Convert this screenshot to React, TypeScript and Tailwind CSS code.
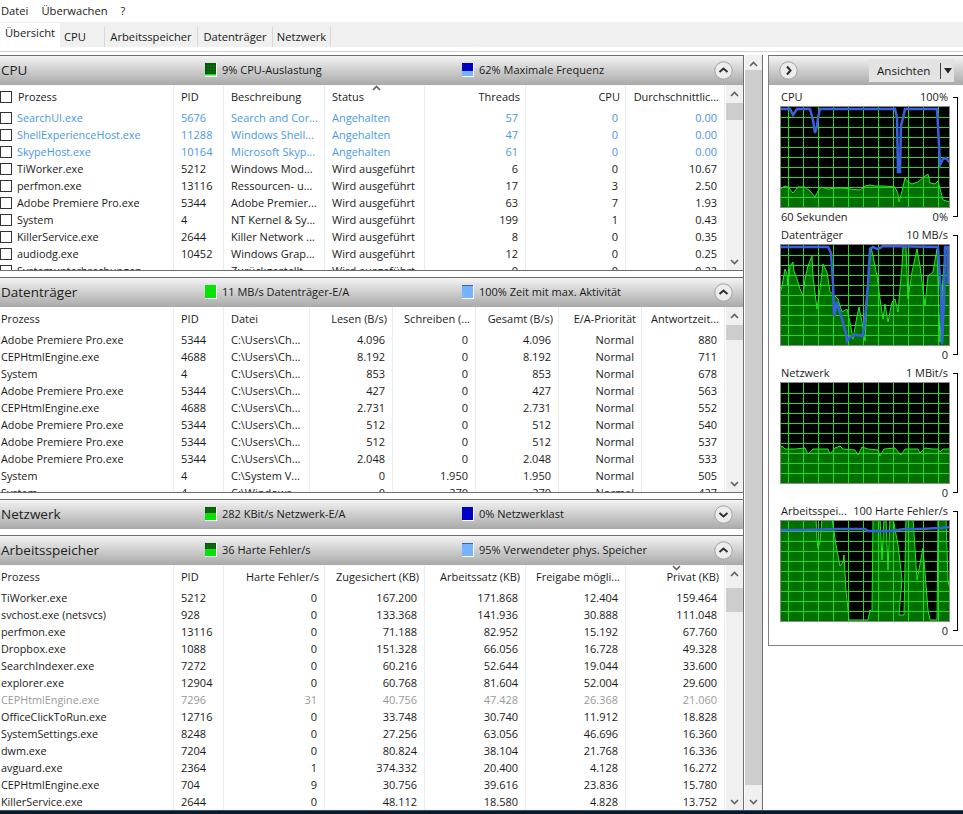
const GRID_X = [8.5, 23.5, 38.5, 53.5, 68.5, 83.5, 98.5, 113.5, 128.5, 143.5, 158.5]
const GRID_Y = [11.5, 21.5, 31.5, 41.5, 51.5, 61.5, 71.5, 81.5, 91.5]

interface ChartProps {
  green: string
  blue?: string
}

function Chart({ green, blue }: ChartProps) {
  return (
    <svg width="170" height="102" viewBox="0 0 170 102" className="block">
      <rect width="170" height="102" fill="#000" />
      <polygon points={`0,102 ${green} 170,102`} fill="#007000" />
      {GRID_X.map((x) => (
        <line key={x} x1={x} x2={x} y1="0" y2="102" stroke="#1cdc1c" strokeWidth="1" />
      ))}
      {GRID_Y.map((y) => (
        <line key={y} x1="0" x2="170" y1={y} y2={y} stroke="#1cdc1c" strokeWidth="1" />
      ))}
      <polyline points={green} fill="none" stroke="#22ea22" strokeWidth="1" />
      {blue && <polyline points={blue} fill="none" stroke="#3a60e0" strokeWidth="2.5" />}
      <rect x="0.5" y="0.5" width="169" height="101" fill="none" stroke="#8c8c8c" strokeWidth="1" />
    </svg>
  )
}

function Swatch({ kind }: { kind: string }) {
  return (
    <svg width="12" height="14" viewBox="0 0 12 14" className="block shrink-0">
      <rect width="12" height="14" fill="#fff" />
      {kind === 'cpu' && (
        <>
          <rect width="11" height="12" fill="#064a06" />
          <path d="M0 3h11M0 6h11M0 9h11M3 0v12M6 0v12M9 0v12" stroke="#0c8a0c" strokeWidth="0.7" />
          <rect y="11" width="11" height="1.5" fill="#10e010" />
        </>
      )}
      {kind === 'half' && (
        <>
          <rect width="11" height="6" fill="#064a06" />
          <path d="M0 2h11M0 4h11M3 0v6M6 0v6M9 0v6" stroke="#0c8a0c" strokeWidth="0.7" />
          <rect y="6" width="11" height="7" fill="#06e406" />
        </>
      )}
      {kind === 'full' && <rect width="11" height="13" fill="#06e406" />}
      {kind === 'freq' && (
        <>
          <rect width="11" height="8" fill="#0000c4" />
          <rect y="8" width="11" height="5" fill="#74b4ff" />
        </>
      )}
      {kind === 'light' && (
        <>
          <rect width="11" height="13" fill="#74b4ff" />
          <rect width="11" height="1" fill="#3c60b0" />
        </>
      )}
      {kind === 'dark' && <rect width="11" height="13" fill="#0000c4" />}
    </svg>
  )
}

function RoundButton({ dir }: { dir: 'up' | 'down' | 'right' }) {
  const path = dir === 'up' ? 'M5.5 11 9.5 7.5 13.5 11' : dir === 'down' ? 'M5.5 8 9.5 11.5 13.5 8' : 'M8 5.5 11.5 9.5 8 13.5'
  return (
    <svg width="19" height="19" viewBox="0 0 19 19" className="block">
      <circle cx="9.5" cy="9.5" r="8.7" fill="#ececec" stroke="#a2a2a2" strokeWidth="1" />
      <path d={path} fill="none" stroke="#303030" strokeWidth="2" />
    </svg>
  )
}

function Arrow({ dir }: { dir: 'up' | 'down' }) {
  return (
    <svg width="9" height="6" viewBox="0 0 9 6" className="block">
      <path d={dir === 'up' ? 'M1 5 4.5 1.5 8 5' : 'M1 1 4.5 4.5 8 1'} fill="none" stroke="#606060" strokeWidth="1.6" />
    </svg>
  )
}

function SectionHeader({ title, left, leftIcon, right, rightIcon, open }: {
  title: string
  left: string
  leftIcon: string
  right: string
  rightIcon: string
  open: boolean
}) {
  return (
    <div className="flex h-[30px] shrink-0 items-center border-t border-[#6e6e6e] bg-gradient-to-b from-[#f4f4f4] to-[#a9a9a9] pb-px">
      <div className="w-[205px] pl-px text-[13.5px] text-[#222]">{title}</div>
      <div className="flex w-[257px] items-center gap-[5px]">
        <Swatch kind={leftIcon} />
        <span>{left}</span>
      </div>
      <div className="flex items-center gap-[5px]">
        <Swatch kind={rightIcon} />
        <span>{right}</span>
      </div>
      <div className="ml-auto mr-[10px]">
        <RoundButton dir={open ? 'up' : 'down'} />
      </div>
    </div>
  )
}

function Scroll({ thumbClass, spacerClass }: { thumbClass: string; spacerClass?: string }) {
  return (
    <div className="flex w-[17px] shrink-0 flex-col bg-[#f0f0f0]">
      <div className="flex h-[18px] shrink-0 items-center justify-center">
        <Arrow dir="up" />
      </div>
      {spacerClass && <div className={spacerClass} />}
      <div className={thumbClass} />
      <div className="mt-auto flex h-[16px] shrink-0 items-center justify-center">
        <Arrow dir="down" />
      </div>
    </div>
  )
}

const CPU_COLS = 'grid grid-cols-[174px_50px_101px_100px_101px_100px_99px]'
const DISK_COLS = 'grid grid-cols-[174px_50px_86px_83px_83px_83px_83px_83px]'
const MEM_COLS = 'grid grid-cols-[174px_50px_101px_100px_101px_100px_99px]'

const line = 'border-r border-[#e8edf3]'

function Cell({ children, right, head, first }: { children?: React.ReactNode; right?: boolean; head?: boolean; first?: boolean }) {
  const align = first ? 'pl-px text-[10.8px]' : right ? (head ? 'justify-end pr-[5px]' : 'justify-end pr-[7px]') : 'pl-[7px]'
  return <div className={`flex items-center overflow-hidden whitespace-nowrap pb-px ${line} ${align}`}>{children}</div>
}

function Checkbox() {
  return <span className="-ml-px mr-[5px] block h-[12px] w-[12px] shrink-0 border border-[#333] bg-white" />
}

const cpuRows = [
  ['SearchUI.exe', '5676', 'Search and Cor...', 'Angehalten', '57', '0', '0.00'],
  ['ShellExperienceHost.exe', '11288', 'Windows Shell...', 'Angehalten', '47', '0', '0.00'],
  ['SkypeHost.exe', '10164', 'Microsoft Skyp...', 'Angehalten', '61', '0', '0.00'],
  ['TiWorker.exe', '5212', 'Windows Mod...', 'Wird ausgeführt', '6', '0', '10.67'],
  ['perfmon.exe', '13116', 'Ressourcen- u...', 'Wird ausgeführt', '17', '3', '2.50'],
  ['Adobe Premiere Pro.exe', '5344', 'Adobe Premier...', 'Wird ausgeführt', '63', '7', '1.93'],
  ['System', '4', 'NT Kernel & Sy...', 'Wird ausgeführt', '199', '1', '0.43'],
  ['KillerService.exe', '2644', 'Killer Network ...', 'Wird ausgeführt', '8', '0', '0.35'],
  ['audiodg.exe', '10452', 'Windows Grap...', 'Wird ausgeführt', '12', '0', '0.25'],
  ['Systemunterbrechungen', '', 'Zurückgestellt...', 'Wird ausgeführt', '0', '0', '0.22'],
]

const diskRows = [
  ['Adobe Premiere Pro.exe', '5344', 'C:\\Users\\Ch...', '4.096', '0', '4.096', 'Normal', '880'],
  ['CEPHtmlEngine.exe', '4688', 'C:\\Users\\Ch...', '8.192', '0', '8.192', 'Normal', '711'],
  ['System', '4', 'C:\\Users\\Ch...', '853', '0', '853', 'Normal', '678'],
  ['Adobe Premiere Pro.exe', '5344', 'C:\\Users\\Ch...', '427', '0', '427', 'Normal', '563'],
  ['CEPHtmlEngine.exe', '4688', 'C:\\Users\\Ch...', '2.731', '0', '2.731', 'Normal', '552'],
  ['Adobe Premiere Pro.exe', '5344', 'C:\\Users\\Ch...', '512', '0', '512', 'Normal', '540'],
  ['Adobe Premiere Pro.exe', '5344', 'C:\\Users\\Ch...', '512', '0', '512', 'Normal', '537'],
  ['Adobe Premiere Pro.exe', '5344', 'C:\\Users\\Ch...', '2.048', '0', '2.048', 'Normal', '533'],
  ['System', '4', 'C:\\System V...', '0', '1.950', '1.950', 'Normal', '505'],
  ['System', '4', 'C:\\Windows...', '0', '270', '270', 'Normal', '427'],
]

const memRows = [
  ['TiWorker.exe', '5212', '0', '167.200', '171.868', '12.404', '159.464'],
  ['svchost.exe (netsvcs)', '928', '0', '133.368', '141.936', '30.888', '111.048'],
  ['perfmon.exe', '13116', '0', '71.188', '82.952', '15.192', '67.760'],
  ['Dropbox.exe', '1088', '0', '151.328', '66.056', '16.728', '49.328'],
  ['SearchIndexer.exe', '7272', '0', '60.216', '52.644', '19.044', '33.600'],
  ['explorer.exe', '12904', '0', '60.768', '81.604', '52.004', '29.600'],
  ['CEPHtmlEngine.exe', '7296', '31', '40.756', '47.428', '26.368', '21.060'],
  ['OfficeClickToRun.exe', '12716', '0', '33.748', '30.740', '11.912', '18.828'],
  ['SystemSettings.exe', '8248', '0', '27.256', '63.056', '46.696', '16.360'],
  ['dwm.exe', '7204', '0', '80.824', '38.104', '21.768', '16.336'],
  ['avguard.exe', '2364', '1', '374.332', '20.400', '4.128', '16.272'],
  ['CEPHtmlEngine.exe', '704', '9', '30.756', '39.616', '23.836', '15.780'],
  ['KillerService.exe', '2644', '0', '48.112', '18.580', '4.828', '13.752'],
]

function ChartBlock({ label, max, bottomLeft, bottomRight, green, blue }: {
  label: string
  max: string
  bottomLeft?: string
  bottomRight: string
  green: string
  blue?: string
}) {
  return (
    <div className="relative pl-[11px]">
      <div className="flex h-[18px] w-[170px] items-center justify-between whitespace-nowrap pl-px pr-[2px]">
        <span>{label}</span>
        <span>{max}</span>
      </div>
      <Chart green={green} blue={blue} />
      <div className="flex h-[18px] w-[170px] items-center justify-between whitespace-nowrap pl-px pr-[2px]">
        <span>{bottomLeft}</span>
        <span>{bottomRight}</span>
      </div>
      <div className="absolute left-[184px] top-[9px] bottom-[9px] w-[5px] border-y border-r border-black" />
    </div>
  )
}

export default function App() {
  return (
    <div className="flex h-[814px] w-[963px] flex-col overflow-hidden bg-white font-['Open_Sans',sans-serif] text-[11px] text-[#1a1a1a]">
      {/* Menu */}
      <div className="flex h-[22px] shrink-0 items-center gap-[13px] pl-px text-[11.2px]">
        <span>Datei</span>
        <span>Überwachen</span>
        <span>?</span>
      </div>

      {/* Tabs */}
      <div className="flex h-[25px] shrink-0 items-end bg-[#f0f0f0] text-[11.2px]">
        <div className="flex h-[24px] w-[60px] items-center justify-center bg-white pb-[3px]">Übersicht</div>
        <div className="flex h-[20px] w-[45px] items-center border-r border-[#d9d9d9] pl-[4px]">CPU</div>
        <div className="flex h-[20px] w-[93px] items-center justify-center border-r border-[#d9d9d9]">Arbeitsspeicher</div>
        <div className="flex h-[20px] w-[75px] items-center justify-center border-r border-[#d9d9d9]">Datenträger</div>
        <div className="flex h-[20px] w-[58px] items-center justify-center border-r border-[#d9d9d9]">Netzwerk</div>
      </div>
      <div className="mt-[4px] h-px shrink-0 bg-[#d4d4d4]" />

      <div className="mt-[3px] flex min-h-0 flex-1">
        {/* Left column */}
        <div className="flex w-[744px] shrink-0 flex-col gap-[6px] border-r border-[#6e6e6e]">
          {/* CPU */}
          <div className="flex h-[216px] flex-col border-b border-[#6e6e6e]">
            <SectionHeader title="CPU" left="9% CPU-Auslastung" leftIcon="cpu" right="62% Maximale Frequenz" rightIcon="freq" open />
            <div className="flex min-h-0 flex-1">
              <div className="relative min-w-0 flex-1 overflow-hidden">
                <div className={`${CPU_COLS} h-[25px]`}>
                  <Cell first><Checkbox /><span className="pl-px">Prozess</span></Cell>
                  <Cell>PID</Cell>
                  <Cell>Beschreibung</Cell>
                  <Cell>Status</Cell>
                  <Cell right head>Threads</Cell>
                  <Cell right head>CPU</Cell>
                  <Cell right head>Durchschnittlic...</Cell>
                </div>
                {cpuRows.map((r) => (
                  <div key={r[0]} className={`${CPU_COLS} h-[17px] ${r[3] === 'Angehalten' ? 'text-[#4a97e6]' : ''}`}>
                    <Cell first><Checkbox />{r[0]}</Cell>
                    <Cell>{r[1]}</Cell>
                    <Cell>{r[2]}</Cell>
                    <Cell>{r[3]}</Cell>
                    <Cell right>{r[4]}</Cell>
                    <Cell right>{r[5]}</Cell>
                    <Cell right>{r[6]}</Cell>
                  </div>
                ))}
                <div className="absolute left-[372px] top-0"><Arrow dir="up" /></div>
              </div>
              <Scroll thumbClass="h-[17px] bg-[#cdcdcd]" />
            </div>
          </div>

          {/* Disk */}
          <div className="flex h-[216px] flex-col border-b border-[#6e6e6e]">
            <SectionHeader title="Datenträger" left="11 MB/s Datenträger-E/A" leftIcon="full" right="100% Zeit mit max. Aktivität" rightIcon="light" open />
            <div className="flex min-h-0 flex-1">
              <div className="min-w-0 flex-1 overflow-hidden">
                <div className={`${DISK_COLS} h-[25px]`}>
                  <Cell first>Prozess</Cell>
                  <Cell>PID</Cell>
                  <Cell>Datei</Cell>
                  <Cell right head>Lesen (B/s)</Cell>
                  <Cell right head>Schreiben (...</Cell>
                  <Cell right head>Gesamt (B/s)</Cell>
                  <Cell right head>E/A-Priorität</Cell>
                  <Cell right head>Antwortzeit...</Cell>
                </div>
                {diskRows.map((r, i) => (
                  <div key={i} className={`${DISK_COLS} h-[17px]`}>
                    <Cell first>{r[0]}</Cell>
                    <Cell>{r[1]}</Cell>
                    <Cell>{r[2]}</Cell>
                    <Cell right>{r[3]}</Cell>
                    <Cell right>{r[4]}</Cell>
                    <Cell right>{r[5]}</Cell>
                    <Cell right>{r[6]}</Cell>
                    <Cell right>{r[7]}</Cell>
                  </div>
                ))}
              </div>
              <Scroll thumbClass="h-[15px] bg-[#cdcdcd]" />
            </div>
          </div>

          {/* Network */}
          <SectionHeader title="Netzwerk" left="282 KBit/s Netzwerk-E/A" leftIcon="half" right="0% Netzwerklast" rightIcon="dark" open={false} />

          {/* Memory */}
          <div className="flex min-h-0 flex-1 flex-col">
            <SectionHeader title="Arbeitsspeicher" left="36 Harte Fehler/s" leftIcon="half" right="95% Verwendeter phys. Speicher" rightIcon="light" open />
            <div className="flex min-h-0 flex-1">
              <div className="relative min-w-0 flex-1 overflow-hidden">
                <div className={`${MEM_COLS} h-[25px]`}>
                  <Cell first>Prozess</Cell>
                  <Cell>PID</Cell>
                  <Cell right head>Harte Fehler/s</Cell>
                  <Cell right head>Zugesichert (KB)</Cell>
                  <Cell right head>Arbeitssatz (KB)</Cell>
                  <Cell right head>Freigabe mögli...</Cell>
                  <Cell right head>Privat (KB)</Cell>
                </div>
                {memRows.map((r) => (
                  <div key={r[0] + r[1]} className={`${MEM_COLS} h-[17px] ${r[1] === '7296' ? 'text-[#9a9a9a]' : ''}`}>
                    <Cell first>{r[0]}</Cell>
                    <Cell>{r[1]}</Cell>
                    <Cell right>{r[2]}</Cell>
                    <Cell right>{r[3]}</Cell>
                    <Cell right>{r[4]}</Cell>
                    <Cell right>{r[5]}</Cell>
                    <Cell right>{r[6]}</Cell>
                  </div>
                ))}
                <div className="absolute left-[672px] top-0"><Arrow dir="down" /></div>
              </div>
              <Scroll thumbClass="h-[24px] bg-[#cdcdcd]" spacerClass="h-[5px] shrink-0" />
            </div>
          </div>
        </div>

        {/* Outer scrollbar */}
        <div className="ml-px flex w-[18px] shrink-0 flex-col border-r border-[#6e6e6e] bg-[#f0f0f0]">
          <div className="flex h-[15px] shrink-0 items-center justify-center pt-[2px]"><Arrow dir="up" /></div>
          <div className="h-[715px] shrink-0 bg-[#cdcdcd]" />
          <div className="mt-auto flex h-[16px] shrink-0 items-center justify-center"><Arrow dir="down" /></div>
        </div>

        {/* Right panel */}
        <div className="ml-[5px] flex h-[591px] min-w-0 flex-1 flex-col border-b border-l border-[#808080]">
          <div className="flex h-[30px] shrink-0 items-center border-t border-[#6e6e6e] bg-gradient-to-b from-[#f4f4f4] to-[#a9a9a9] pl-[10px]">
            <RoundButton dir="right" />
            <div className="ml-[71px] flex h-[23px] w-[85px] items-center bg-[#e3e3e3] pl-[8px] text-[11.6px]">
              Ansichten
              <span className="ml-[10px] h-[16px] w-px bg-[#404040]" />
              <svg width="10" height="6" viewBox="0 0 10 6" className="ml-[2px]"><path d="M1 0h8L5 5.5z" fill="#222" /></svg>
            </div>
          </div>
          <div className="pt-[3px]">
            <ChartBlock
              label="CPU"
              max="100%"
              bottomLeft="60 Sekunden"
              bottomRight="0%"
              green="0,84 3,81 6,80 9,82 13,87 18,81 25,81 30,85 35,91 38,85 41,81 48,83 55,82 62,82 70,83 80,84 85,80 90,79 95,80 105,80 115,81 118,88 119,96 122,85 125,72 128,76 132,78 138,76 145,70 148,68 150,77 155,78 158,75 163,94 170,96"
              blue="0,3 10,3 13,9 17,3 30,3 33,14 35,27 37,20 38,12 40,3 115,3 117,12 118,66 120,66 121,20 123,12 125,3 157,3 158,20 160,59 163,53 166,52 170,57"
            />
            <ChartBlock
              label="Datenträger"
              max="10 MB/s"
              bottomRight="0"
              green="0,50 2,42 5,25 7,30 8,42 10,22 13,18 14,27 17,35 20,45 23,52 25,35 28,22 32,12 33,32 37,65 40,45 43,20 47,28 50,48 53,50 58,55 62,68 67,65 70,78 73,95 77,72 79,63 82,78 85,97 88,38 91,3 93,12 97,32 100,55 103,75 105,60 108,78 112,58 115,55 118,68 122,22 123,3 126,3 128,55 132,28 137,5 140,22 145,62 148,32 153,28 157,5 160,98 163,32 166,2 170,12"
              blue="0,3 48,3 51,9 53,40 54,72 57,58 58,62 62,75 66,90 67,97 70,93 75,91 78,91 83,92 85,75 88,40 90,5 93,3 97,5 100,4 103,2 158,3 159,20 161,50 162,100 164,60 165,3 168,3 168,40 169,3"
            />
            <ChartBlock
              label="Netzwerk"
              max="1 MBit/s"
              bottomRight="0"
              green="0,66 2,64 5,67 15,67 25,66 28,72 33,67 48,67 50,72 55,66 60,64 63,67 75,68 78,73 82,65 88,67 98,68 100,74 104,67 115,66 121,73 125,67 138,67 140,71 145,66 152,67 158,67 160,70 163,67 170,67"
            />
            <ChartBlock
              label="Arbeitsspei..."
              max="100 Harte Fehler/s"
              bottomRight="0"
              green="0,-2 36,-2 37,20 38,28 40,22 42,-2 52,-2 56,25 60,46 63,42 64,35 66,70 69,100 88,100 90,90 92,92 93,-2 100,-2 102,40 104,-2 106,-2 108,50 110,-2 113,-2 118,25 122,60 119,95 124,95 126,-2 130,-2 133,-2 137,60 143,28 148,90 150,100 157,100 158,-2 163,-2 166,-2 168,60 170,70"
              blue="0,10 20,10 60,9 85,9 88,11 110,11 125,9 140,9 160,8 170,7"
            />
          </div>
        </div>
      </div>

      {/* Taskbar edge */}
      <div className="h-[4px] shrink-0 border-t border-[#1d5a85] bg-[#12181f]" />
    </div>
  )
}
